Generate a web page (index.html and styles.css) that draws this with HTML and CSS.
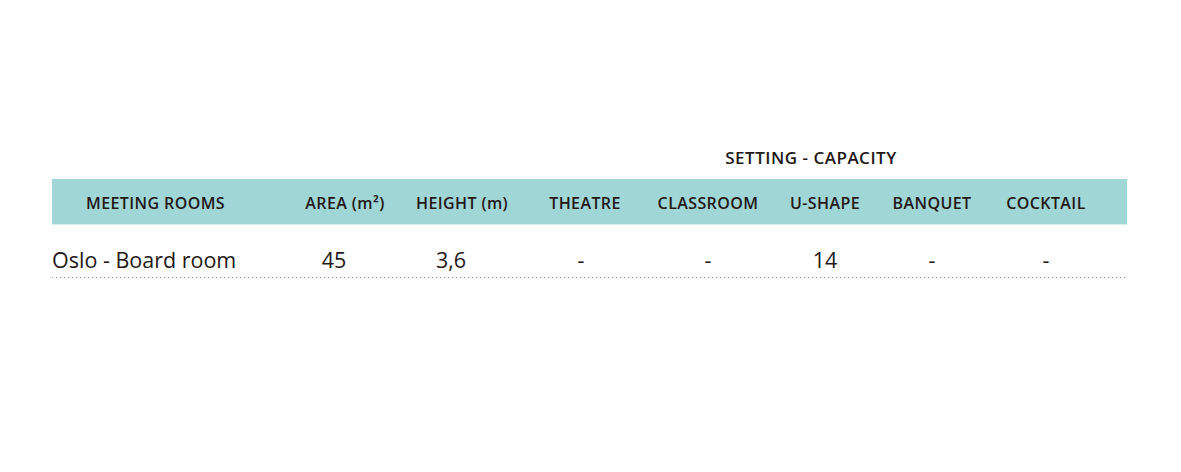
FILE: index.html
```html
<!DOCTYPE html>
<html>
<head>
<meta charset="utf-8">
<link rel="stylesheet" href="styles.css">
</head>
<body>
<div class="page">
  <div class="table">
    <div class="grid title-row">
      <div class="title">SETTING - CAPACITY</div>
    </div>
    <div class="grid head">
      <div class="hc first">MEETING ROOMS</div>
      <div class="hc">AREA (m²)</div>
      <div class="hc">HEIGHT (m)</div>
      <div class="hc">THEATRE</div>
      <div class="hc">CLASSROOM</div>
      <div class="hc">U-SHAPE</div>
      <div class="hc">BANQUET</div>
      <div class="hc">COCKTAIL</div>
    </div>
    <div class="grid row">
      <div class="dc first">Oslo - Board room</div>
      <div class="dc shift-l">45</div>
      <div class="dc shift-l">3,6</div>
      <div class="dc shift-s">-</div>
      <div class="dc">-</div>
      <div class="dc">14</div>
      <div class="dc">-</div>
      <div class="dc">-</div>
    </div>
    <div class="dots"></div>
  </div>
</div>
</body>
</html>
```

FILE: styles.css
```css
html, body {
  margin: 0;
  padding: 0;
  background: #ffffff;
}
body {
  font-family: "Open Sans", "Noto Sans", sans-serif;
  color: #231815;
}
.page {
  padding: 146px 54px 0 52px;
}
.table {
  width: 1075px;
}
.grid {
  display: grid;
  grid-template-columns: 238px 110px 124px 122px 124px 110px 104px 124px 19px;
}
.title-row {
  height: 33px;
}
.title {
  grid-column: 4 / 9;
  text-align: center;
  padding-right: 10px;
  font-size: 17px;
  font-weight: 600;
  letter-spacing: 0.5px;
  line-height: 24px;
}
.head {
  background: #a0d6d6;
  height: 45px;
  align-items: center;
  border-bottom: 1px solid #d4eeee;
}
.hc {
  text-align: center;
  font-size: 16px;
  font-weight: 600;
  letter-spacing: 0.4px;
  padding-top: 2px;
}
.hc.first {
  text-align: left;
  padding-left: 34px;
}
.row {
  height: 52px;
  align-items: center;
  box-sizing: border-box;
  padding-top: 18px;
}
.dots {
  height: 1px;
  background-image: repeating-linear-gradient(to right, #9a9a9a 0, #9a9a9a 1.5px, transparent 1.5px, transparent 4px);
}
.dc {
  text-align: center;
  font-size: 21.5px;
  line-height: 28px;
}
.dc.first {
  text-align: left;
}
.dc.shift-l {
  padding-right: 22px;
}
.dc.shift-s {
  padding-right: 8px;
}
```
